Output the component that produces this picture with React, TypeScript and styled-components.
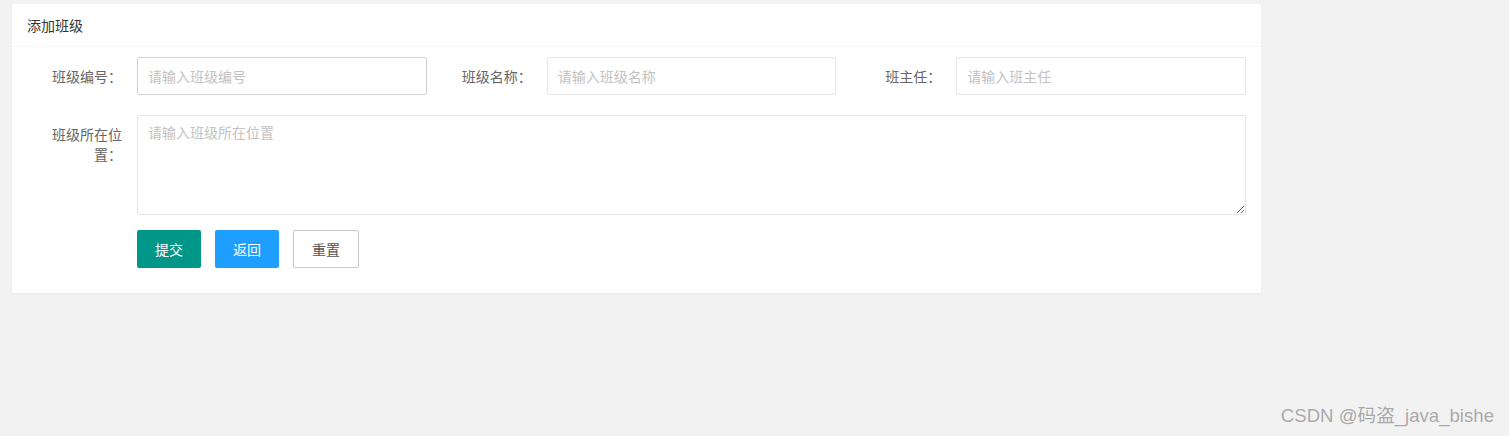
import React from "react";
import styled, { createGlobalStyle } from "styled-components";

const Global = createGlobalStyle`
  html, body { margin: 0; padding: 0; background: #f2f2f2; }
  body {
    font-family: "Noto Sans CJK SC", "Microsoft YaHei", "Liberation Sans", sans-serif;
    font-size: 14px;
    color: #666;
    height: 436px;
    overflow: hidden;
  }
  * { box-sizing: border-box; }
`;

const Page = styled.div`
  position: relative;
  height: 436px;
  padding: 4px 0 0 12px;
`;

const Card = styled.div`
  width: 1249px;
  background: #fff;
  border-radius: 2px;
  box-shadow: 0 1px 2px 0 rgba(0, 0, 0, 0.05);
`;

const CardHeader = styled.div`
  height: 43px;
  line-height: 42px;
  padding: 0 15px;
  border-bottom: 1px solid #f6f6f6;
  color: #333;
  font-size: 14px;
`;

const CardBody = styled.div`
  padding: 10px 15px;
`;

const FormItem = styled.div`
  display: flex;
  align-items: flex-start;
  margin-bottom: 15px;
`;

const Inline = styled.div`
  display: flex;
  align-items: flex-start;
  margin-right: 10px;
  margin-bottom: 5px;
  &:last-child { margin-right: 0; }
`;

const Label = styled.label`
  width: 110px;
  flex: none;
  padding: 9px 15px;
  line-height: 20px;
  text-align: right;
  font-size: 14px;
  color: #666;
`;

const Input = styled.input<{ $hover?: boolean }>`
  width: 289.67px;
  height: 38px;
  padding: 0 10px;
  border: 1px solid ${(p) => (p.$hover ? "#d2d2d2" : "#e6e6e6")};
  border-radius: 2px;
  background: #fff;
  font: inherit;
  font-size: 14px;
  color: #666;
  outline: none;
  &::placeholder { color: #c2c2c2; }
`;

const TextArea = styled.textarea`
  width: 1109px;
  height: 100px;
  padding: 6px 10px;
  line-height: 20px;
  border: 1px solid #e6e6e6;
  border-radius: 2px;
  font: inherit;
  font-size: 14px;
  color: #666;
  outline: none;
  resize: vertical;
  display: block;
  &::placeholder { color: #c2c2c2; }
`;

const ButtonRow = styled.div`
  display: flex;
  gap: 14px;
  margin-left: 110px;
  margin-bottom: 15px;
`;

const Button = styled.button<{ $kind: "green" | "blue" | "plain" }>`
  height: 38px;
  line-height: 38px;
  padding: 0 18px;
  border-radius: 2px;
  font-family: inherit;
  font-size: 14px;
  cursor: pointer;
  white-space: nowrap;
  border: ${(p) => (p.$kind === "plain" ? "1px solid #c9c9c9" : "none")};
  background: ${(p) =>
    p.$kind === "green" ? "#009688" : p.$kind === "blue" ? "#1e9fff" : "#fff"};
  color: ${(p) => (p.$kind === "plain" ? "#555" : "#fff")};
  ${(p) => (p.$kind === "plain" ? "line-height: 36px;" : "")}
`;

const Watermark = styled.div`
  position: absolute;
  right: 15px;
  bottom: 9px;
  font-family: "Liberation Sans", "Noto Sans CJK SC", sans-serif;
  font-size: 18.6px;
  line-height: 22px;
  color: #a8a8a8;
  text-shadow: 0 0 1px rgba(255, 255, 255, 0.8);
`;

export default function App() {
  return (
    <>
      <Global />
      <Page>
        <Card>
          <CardHeader>添加班级</CardHeader>
          <CardBody>
            <FormItem>
              <Inline>
                <Label>班级编号：</Label>
                <Input $hover placeholder="请输入班级编号" />
              </Inline>
              <Inline>
                <Label>班级名称：</Label>
                <Input placeholder="请输入班级名称" />
              </Inline>
              <Inline>
                <Label>班主任：</Label>
                <Input placeholder="请输入班主任" />
              </Inline>
            </FormItem>
            <FormItem>
              <Label>班级所在位置：</Label>
              <TextArea placeholder="请输入班级所在位置" />
            </FormItem>
            <ButtonRow>
              <Button $kind="green">提交</Button>
              <Button $kind="blue">返回</Button>
              <Button $kind="plain">重置</Button>
            </ButtonRow>
          </CardBody>
        </Card>
        <Watermark>CSDN @码盗_java_bishe</Watermark>
      </Page>
    </>
  );
}
